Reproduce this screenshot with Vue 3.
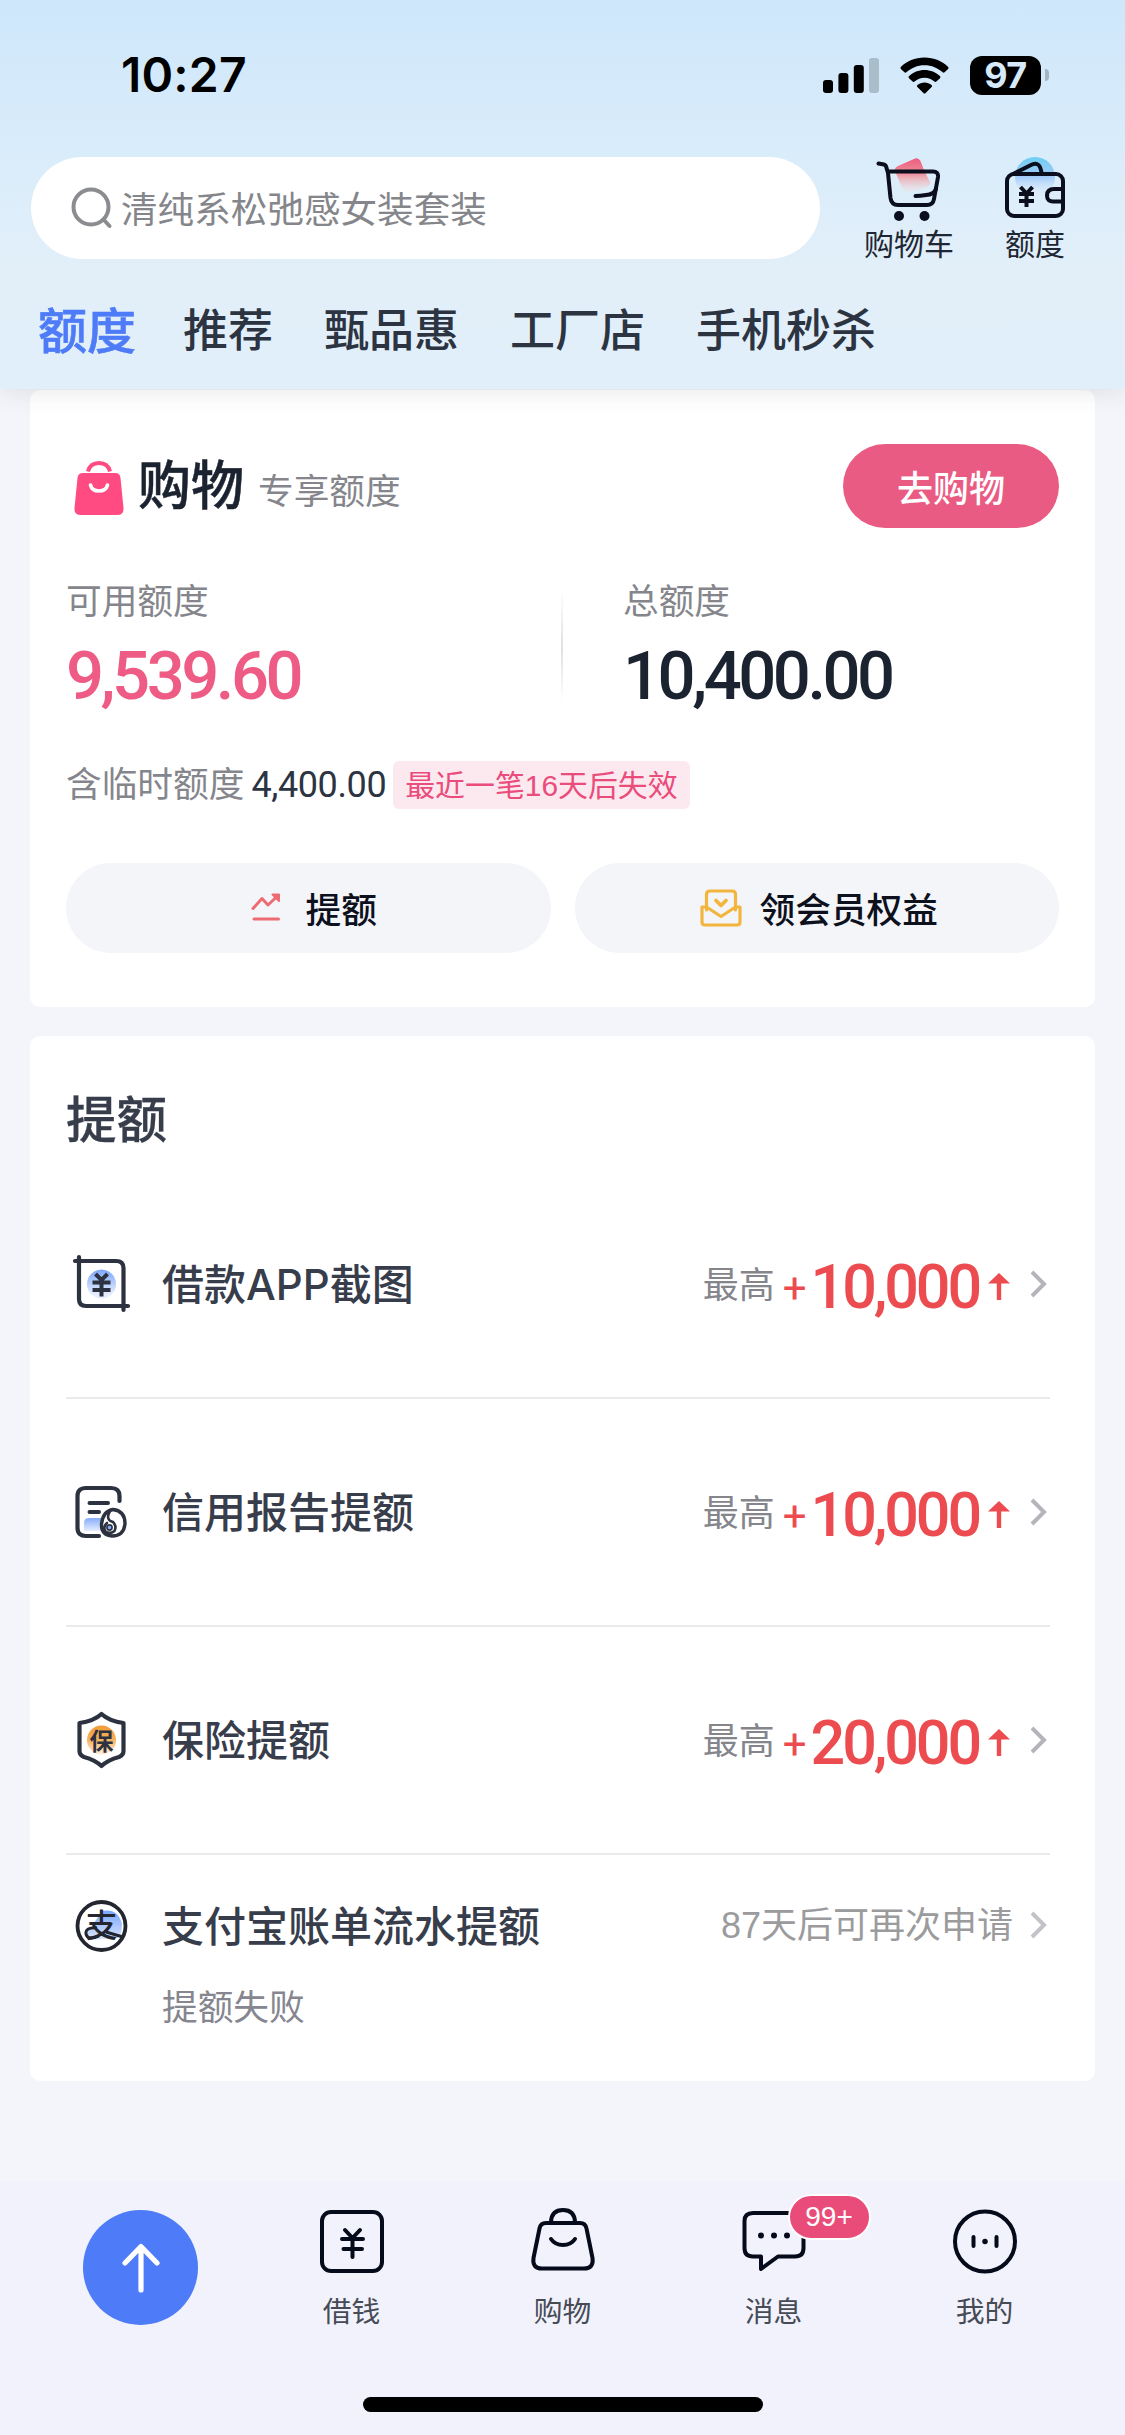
<script setup>
const channels = ['额度', '推荐', '甄品惠', '工厂店', '手机秒杀']

const boosts = [
  { icon: 'crop', title: '借款APP截图', amount: '10,000' },
  { icon: 'report', title: '信用报告提额', amount: '10,000' },
  { icon: 'shield', title: '保险提额', amount: '20,000' },
]

const navItems = [
  { icon: 'loan', label: '借钱' },
  { icon: 'bag', label: '购物' },
  { icon: 'chat', label: '消息', badge: '99+' },
  { icon: 'me', label: '我的' },
]
</script>

<template>
  <div class="screen">
    <header class="header">
      <div class="status">
        <span class="time">10:27</span>
        <div class="status-icons">
          <svg class="signal" width="56" height="36" viewBox="0 0 56 36">
            <rect x="0" y="23" width="10" height="13" rx="3" />
            <rect x="15.4" y="16" width="10" height="20" rx="3" />
            <rect x="30.8" y="8" width="10" height="28" rx="3" />
            <rect x="46" y="1" width="10" height="35" rx="3" fill="#a9bdcb" />
          </svg>
          <svg class="wifi" width="49" height="37" viewBox="0 0 49 37">
            <path d="M24.5 0.5C34 .5 42.500 4.200 48 9.800C48.700 10.500 48.700 11.300 48.100 11.900L44.600 15.300C44 15.900 43.200 15.900 42.600 15.300C37.900 10.900 31.600 8.200 24.500 8.200C17.400 8.200 11.100 10.900 6.400 15.300C5.800 15.900 5 15.900 4.400 15.300L.9 11.900C.3 11.300 .3 10.500 1 9.800C6.500 4.200 15 .5 24.500 .5Z" />
            <path d="M24.500 13C30.500 13 35.900 15.300 39.900 19.100C40.600 19.800 40.600 20.600 40 21.200L36.400 24.600C35.800 25.200 35 25.200 34.400 24.600C31.700 22.200 28.300 20.700 24.500 20.700C20.700 20.700 17.300 22.200 14.600 24.600C14 25.200 13.200 25.200 12.600 24.600L9 21.200C8.400 20.600 8.400 19.800 9.100 19.100C13.100 15.300 18.500 13 24.500 13Z" />
            <path d="M24.500 25.400C27.200 25.400 29.700 26.400 31.500 28C32.200 28.600 32.200 29.400 31.600 30L25.600 36C24.900 36.700 24.100 36.700 23.400 36L17.400 30C16.800 29.400 16.800 28.600 17.500 28C19.300 26.400 21.800 25.400 24.500 25.400Z" />
          </svg>
          <div class="battery">97</div>
          <i class="battery-tip"></i>
        </div>
      </div>

      <div class="search-row">
        <div class="search">
          <svg width="42" height="42" viewBox="0 0 42 42" fill="none" stroke="#8b8c90" stroke-width="4">
            <circle cx="20" cy="20" r="17.500" />
            <path d="M32.500 32.500L38.500 39" stroke-linecap="round" />
          </svg>
          <span>清纯系松弛感女装套装</span>
        </div>
        <div class="shortcut cart">
          <svg width="64" height="66" viewBox="0 0 64 66" fill="none" stroke="#0b0e1c" stroke-width="4" stroke-linecap="round" stroke-linejoin="round">
            <defs>
              <linearGradient id="cartFill" x1="0" y1="0" x2="0" y2="1">
                <stop offset="0" stop-color="#ee5c7f" />
                <stop offset=".45" stop-color="#ec8f9b" />
                <stop offset="1" stop-color="#f4ddda" stop-opacity=".2" />
              </linearGradient>
            </defs>
            <path d="M22 9L38 2Q42 0 44.500 4L48 13L54 25Q55 28 51 30L35 35Q28 36 26 31L19 14Q18 11 22 9Z" fill="url(#cartFill)" stroke="none" />
            <path d="M2.500 6.500L8 7.500Q10 8 10.500 11L12 16L14.500 41Q15.500 48 22 48H51Q57 48 58 42L62 20Q62.500 14.500 57 14.500H12" />
            <path d="M60 32Q58 37.500 50 38Q44 39 39.500 39" />
            <circle cx="23" cy="59" r="5" fill="#0b0e1c" stroke="none" />
            <circle cx="48.500" cy="59" r="5" fill="#0b0e1c" stroke="none" />
          </svg>
          <span>购物车</span>
        </div>
        <div class="shortcut wallet">
          <svg width="62" height="66" viewBox="0 0 62 66" fill="none" stroke="#0b0e1c" stroke-width="4" stroke-linecap="round" stroke-linejoin="round">
            <defs>
              <linearGradient id="walletFill" x1="0" y1="0" x2="0" y2="1">
                <stop offset="0" stop-color="#6fcdf3" />
                <stop offset=".5" stop-color="#a3cbf8" />
                <stop offset=".9" stop-color="#d6e8fb" stop-opacity=".2" />
              </linearGradient>
            </defs>
            <circle cx="31" cy="20" r="20" fill="url(#walletFill)" stroke="none" />
            <rect x="3" y="17" width="56" height="42" rx="7" />
            <path d="M9 17L28 7.500Q36 4 37.500 16" />
            <path d="M59 32H50Q43 32 43 38.500T50 44.500H59" />
            <path d="M16.500 30L22.500 36.500L28.500 30M22.500 36V50M15 37H30M15 44H30" stroke-linecap="butt" />
          </svg>
          <span>额度</span>
        </div>
      </div>

      <nav class="channels">
        <span v-for="(c, i) in channels" :key="c" :class="{ active: i === 0 }">{{ c }}</span>
      </nav>
    </header>

    <main class="content">
      <section class="card quota">
        <div class="quota-head">
          <svg width="50" height="54" viewBox="0 0 50 54">
            <path d="M14 10.500Q16 2 25 2T36 10.500" fill="none" stroke="#ff4b81" stroke-width="4" />
            <path d="M9 12H41Q46 12 46.500 17L49.500 47Q50 54 43 54H7Q0 54 .5 47L3.500 17Q4 12 9 12Z" fill="#ff4b81" />
            <path d="M16.500 24Q18 30 25 30T33.500 24" fill="none" stroke="#fff" stroke-width="3.600" stroke-linecap="round" />
          </svg>
          <h1>购物</h1>
          <span class="sub">专享额度</span>
          <button class="go">去购物</button>
        </div>

        <div class="stats">
          <div class="stat left">
            <span class="label">可用额度</span>
            <strong class="pink">9,539.60</strong>
          </div>
          <i class="split"></i>
          <div class="stat right">
            <span class="label">总额度</span>
            <strong>10,400.00</strong>
          </div>
        </div>

        <div class="temp">
          <span class="temp-label">含临时额度</span>
          <span class="temp-num">4,400.00</span>
          <span class="tag">最近一笔<b>16</b>天后失效</span>
        </div>

        <div class="actions">
          <button class="raise">
            <svg width="30" height="30" viewBox="0 0 30 30" fill="none" stroke="#ee6b74" stroke-width="3" stroke-linecap="round" stroke-linejoin="round">
              <path d="M2 15.500L11 5.500L17 12L27 2.500" />
              <path d="M21.500 1.500H28V8Z" fill="#ee6b74" stroke-width="2" />
              <path d="M3 26H27.500" />
            </svg>
            <span>提额</span>
          </button>
          <button class="perks">
            <svg width="42" height="38" viewBox="0 0 42 38" fill="none" stroke="#f2b63e" stroke-width="3.200" stroke-linecap="round" stroke-linejoin="round">
              <path d="M6.500 21V5.500Q6.500 2 10 2H32Q35.500 2 35.500 5.500V21" />
              <path d="M6.500 18H2V33Q2 36 5 36H37Q40 36 40 33V18H35.500L21 27.500Z" />
              <path d="M16 11.500L21 16.500L26 11.500" stroke-width="3.800" />
            </svg>
            <span>领会员权益</span>
          </button>
        </div>
      </section>

      <section class="card boosts">
        <h2>提额</h2>
        <div v-for="b in boosts" :key="b.title" class="row">
          <div class="row-icon">
            <svg v-if="b.icon === 'crop'" width="60" height="60" viewBox="0 0 60 60" fill="none" stroke="#2d3240" stroke-width="4.200" stroke-linecap="round">
              <defs>
                <linearGradient id="coinFill" x1="0" y1="0" x2="0" y2="1">
                  <stop offset="0" stop-color="#7ba6fa" />
                  <stop offset=".85" stop-color="#e6eeff" />
                </linearGradient>
              </defs>
              <circle cx="29.500" cy="30" r="14.500" fill="url(#coinFill)" stroke="none" />
              <path d="M7 3V45Q7 52 14 52H56M3 7H44Q51.500 7 51.500 14V56" />
              <path d="M23.500 20L29.500 26L35.500 20M29.500 27V42.500M20.500 28.500H38.500M20.500 36H38.500" stroke-width="4" stroke-linecap="butt" />
            </svg>
            <svg v-else-if="b.icon === 'report'" width="60" height="60" viewBox="0 0 60 60" fill="none" stroke="#2d3240" stroke-width="4.200" stroke-linecap="round">
              <defs>
                <linearGradient id="reportFill" x1="0" y1="0" x2="0" y2="1">
                  <stop offset="0" stop-color="#86adfa" />
                  <stop offset="1" stop-color="#e6eeff" />
                </linearGradient>
              </defs>
              <path d="M12 49V41Q12 36 17 36H38V49Z" fill="url(#reportFill)" stroke="none" />
              <path d="M27 54H14Q5.500 54 5.500 46V14Q5.500 6 14 6H39Q47.500 6 47.500 14V19" />
              <path d="M17.500 21H36M17.500 30H27" stroke-width="4" />
              <path d="M41 27.500Q53 29 53 41.500Q52 54 40 54Q29 53 29.500 42Q31 29 41 27.500Z" stroke-width="3.400" fill="#fff" />
              <path d="M38 29Q33 38 41 40Q45 44 42.500 49Q38 52.500 33.500 49.500Q30.500 45 35 41" stroke-width="2.600" />
              <circle cx="37.500" cy="45.500" r="2.600" fill="#86adfa" stroke-width="1.600" />
            </svg>
            <svg v-else width="60" height="60" viewBox="0 0 60 60" fill="none" stroke="#2d3240" stroke-width="4.200" stroke-linejoin="round">
              <defs>
                <linearGradient id="sunFill" x1="0" y1="0" x2="0" y2="1">
                  <stop offset="0" stop-color="#f29a38" />
                  <stop offset=".5" stop-color="#f7b35f" />
                  <stop offset="1" stop-color="#ffeedd" />
                </linearGradient>
              </defs>
              <circle cx="29.500" cy="30" r="14.500" fill="url(#sunFill)" stroke="none" />
              <path d="M29.500 4Q37 11 51.500 13V41Q51.500 45 47 47Q36 50 29.500 56Q23 50 12 47Q7.500 45 7.500 41V13Q22 11 29.500 4Z" />
              <text x="29.500" y="39.500" text-anchor="middle" class="badge-char">保</text>
            </svg>
          </div>
          <span class="row-title">{{ b.title }}</span>
          <span class="most">最高</span>
          <span class="plus">+</span>
          <span class="amount">{{ b.amount }}</span>
          <svg class="up" width="22" height="28" viewBox="0 0 22 28">
            <path d="M11 0L22 10.500H13.200V27H8.800V10.500H0Z" fill="#ec4b50" />
          </svg>
          <svg class="chev" width="17" height="28" viewBox="0 0 17 28" fill="none" stroke="#b3b5ba" stroke-width="4">
            <path d="M2 2L14 14L2 26" />
          </svg>
        </div>
        <div class="row last">
          <div class="row-icon">
            <svg width="60" height="60" viewBox="0 0 60 60" fill="none" stroke="#23262f" stroke-width="3.800">
              <defs>
                <linearGradient id="payFill" x1="0" y1="0" x2="0" y2="1">
                  <stop offset="0" stop-color="#78a4fb" />
                  <stop offset="1" stop-color="#dbe7ff" />
                </linearGradient>
              </defs>
              <path d="M30 15Q46 12 50 28Q50 38 46 42L18 44Q12 38 20 30Z" fill="url(#payFill)" stroke="none" />
              <circle cx="29.500" cy="30" r="24" />
              <text x="29.500" y="41" text-anchor="middle" class="pay-char">支</text>
              <path d="M25 32Q13 31 14 38Q16 45 27 40M34 36L51 41" stroke-width="3" />
            </svg>
          </div>
          <div class="row-text">
            <span class="row-title">支付宝账单流水提额</span>
            <span class="fail">提额失败</span>
          </div>
          <span class="wait"><b>87</b>天后可再次申请</span>
          <svg class="chev" width="17" height="28" viewBox="0 0 17 28" fill="none" stroke="#c2c3c6" stroke-width="4">
            <path d="M2 2L14 14L2 26" />
          </svg>
        </div>
      </section>
    </main>

    <footer class="tabbar">
      <div class="nav">
        <div class="nav-cell">
          <div class="top-btn">
            <svg width="40" height="52" viewBox="0 0 40 52" fill="none" stroke="#fff" stroke-width="5.200" stroke-linecap="round" stroke-linejoin="round">
              <path d="M20 48V5M4 21L20 4.500L36 21" />
            </svg>
          </div>
        </div>
        <div v-for="n in navItems" :key="n.label" class="nav-cell">
          <div class="nav-icon">
            <svg width="66" height="68" viewBox="0 0 66 68" fill="none" stroke="#060b1b" stroke-width="4" stroke-linecap="round" stroke-linejoin="round">
              <g v-if="n.icon === 'loan'">
                <rect x="3" y="5" width="60" height="59" rx="9" />
                <path d="M26 23L33.500 31L41 23M33.500 31V50M23 32H44M24.500 42H43" />
              </g>
              <g v-else-if="n.icon === 'bag'">
                <path d="M16 16H50Q55.500 16 56.500 21.500L62.500 51Q64 61.500 54 61.500H12Q2 61.500 3.500 51L9.500 21.500Q10.500 16 16 16Z" />
                <path d="M21 15Q21.500 3 33 3T45 15M21 32Q25 38 33 38T45 32" />
              </g>
              <g v-else-if="n.icon === 'chat'">
                <path d="M12 6H54Q62.500 6 62.500 14V41Q62.500 49.500 54 49.500H37L20 62V49.500H12Q3.500 49.500 3.500 41V14Q3.500 6 12 6Z" />
                <path d="M20 28.500V28.600M33 28.500V28.600M46 28.500V28.600" stroke-width="6" />
              </g>
              <g v-else>
                <circle cx="33" cy="34.500" r="30" />
                <path d="M21.500 30V39M44.500 30V39" />
                <path d="M33 34.500V34.600" stroke-width="5.500" />
              </g>
            </svg>
            <span v-if="n.badge" class="badge">{{ n.badge }}</span>
          </div>
          <span class="nav-label">{{ n.label }}</span>
        </div>
      </div>
      <i class="home"></i>
    </footer>
  </div>
</template>

<style>
body {
  background: #f4f5fa;
}
</style>

<style scoped>
.screen {
  width: 1125px;
  height: 2435px;
  display: flex;
  flex-direction: column;
  overflow: hidden;
  background: #f4f5fa;
  font-family: "Noto Sans CJK SC", sans-serif;
  white-space: nowrap;
}
.screen * {
  box-sizing: border-box;
}
button {
  border: 0;
  padding: 0;
  font: inherit;
}
b {
  font-weight: 400;
}
h1,
h2 {
  margin: 0;
}
svg {
  display: block;
  flex: none;
}
.header {
  position: relative;
  z-index: 1;
  flex: none;
  height: 389px;
  background: linear-gradient(#cee7fb, #dbedfa 45%, #e2eff9 70%, #e1effa);
  box-shadow: 0 2px 24px rgba(60, 60, 70, 0.12);
}
.status {
  height: 150px;
  display: flex;
  align-items: center;
  padding: 0 76px 0 121px;
}
.time {
  flex: 1;
  font: 600 48px/60px Inter, sans-serif;
  letter-spacing: 0.2px;
  color: #000;
}
.status-icons {
  display: flex;
  align-items: center;
}
.wifi {
  margin: 0 21px;
}
.battery {
  width: 71px;
  height: 39px;
  border-radius: 12px;
  background: #000;
  color: #d6eafb;
  font: 700 36px/39px Inter, sans-serif;
  letter-spacing: -0.5px;
  text-align: center;
}
.battery-tip {
  width: 4px;
  height: 12px;
  margin-left: 4px;
  border-radius: 0 4px 4px 0;
  background: #a3b5c2;
}
.search-row {
  display: flex;
  align-items: flex-start;
  margin-top: 7px;
  height: 102px;
  padding-left: 31px;
}
.search {
  width: 789px;
  height: 102px;
  border-radius: 51px;
  background: #fff;
  display: flex;
  align-items: center;
  padding-left: 40px;
  color: #85868b;
  font-size: 36.600px;
}
.search span {
  margin-left: 8px;
  padding-bottom: 2px;
}
.shortcut {
  display: flex;
  flex-direction: column;
  align-items: center;
  color: #1f2633;
  font-size: 30px;
  line-height: 38px;
}
.cart {
  width: 90px;
  margin-left: 44px;
}
.cart svg {
  margin-left: -3px;
}
.wallet {
  width: 62px;
  margin-left: 50px;
}
.channels {
  display: flex;
  align-items: center;
  height: 130px;
  padding: 6px 0 0 38px;
  gap: 51px;
  font-size: 45px;
  font-weight: 500;
  color: #2c3442;
}
.channels .active {
  margin-right: -4px;
  font-size: 49px;
  color: #4e7bf7;
  -webkit-text-stroke: 0.6px currentColor;
}
.content {
  flex: none;
  height: 1793px;
  padding: 1px 30px 0;
}
.card {
  background: #fff;
  border-radius: 10px;
  padding: 0 36px;
}
.quota {
  height: 617px;
  padding-top: 54px;
}
.quota-head {
  display: flex;
  align-items: center;
  height: 84px;
}
.quota-head svg {
  margin: 3px 14px 0 8px;
}
.quota-head h1 {
  font-size: 53px;
  font-weight: 500;
  line-height: 60px;
  margin-top: -8px;
  color: #1b2330;
  -webkit-text-stroke: 0.5px currentColor;
}
.sub {
  flex: 1;
  margin: 6px 0 0 14px;
  font-size: 35.700px;
  line-height: 44px;
  color: #85868c;
}
.go {
  width: 216px;
  height: 84px;
  border-radius: 42px;
  background: #ea5b83;
  color: #fff;
  font-size: 36px;
  font-weight: 500;
  line-height: 81px;
}
.stats {
  display: flex;
  margin-top: 46px;
  height: 150px;
}
.left {
  width: 495px;
}
.stat {
  display: flex;
  flex-direction: column;
}
.label {
  font-size: 35.700px;
  line-height: 50px;
  color: #85868c;
}
.stat strong {
  font: 500 67px/104px Roboto, sans-serif;
  letter-spacing: -3.5px;
  color: #1b2330;
}
.stat .pink {
  color: #ee5b84;
}
.split {
  width: 2px;
  height: 112px;
  margin-top: 17px;
  background: linear-gradient(#fff, #dfe0e3, #fff);
}
.right {
  margin-left: 60px;
}
.temp {
  display: flex;
  align-items: center;
  height: 48px;
  margin-top: 37px;
  font-size: 36px;
}
.temp-label {
  line-height: 40px;
  margin-top: -7px;
  font-size: 35.700px;
  color: #85868c;
}
.temp-num {
  margin: -1px 7px 0 7px;
  font-family: Roboto, sans-serif;
  letter-spacing: -0.4px;
  color: #2c3442;
}
.tag {
  height: 48px;
  padding: 0 12px;
  border-radius: 6px;
  background: #fce9ef;
  color: #ea4c7c;
  font-size: 29.900px;
  line-height: 45px;
}
.tag b,
.wait b {
  font-family: "Liberation Sans", sans-serif;
}
.actions {
  display: flex;
  gap: 24px;
  margin-top: 54px;
}
.actions button {
  width: 485px;
  height: 90px;
  border-radius: 45px;
  background: #f4f5f9;
  display: flex;
  align-items: center;
  justify-content: center;
  font-size: 35.700px;
  font-weight: 500;
  color: #0c111d;
}
.actions span {
  padding-bottom: 2px;
}
.actions .raise {
  padding-left: 11px;
}
.raise svg {
  margin-right: 25px;
}
.actions .perks {
  padding-left: 4px;
}
.perks svg {
  margin-right: 18px;
}
.boosts {
  height: 1045px;
  margin-top: 29px;
}
.boosts h2 {
  height: 135px;
  padding-top: 50px;
  font-size: 50.500px;
  font-weight: 500;
  line-height: 60px;
  color: #373d4b;
  -webkit-text-stroke: 0.3px currentColor;
}
.row {
  display: flex;
  align-items: center;
  height: 228px;
  margin-right: 9px;
  border-bottom: 2px solid #e9eaec;
}
.row-icon {
  width: 60px;
  margin: 0 30px 0 6px;
}
.row-title {
  flex: 1;
  font-family: Inter, "Noto Sans CJK SC", sans-serif;
  font-size: 42px;
  font-weight: 500;
  line-height: 60px;
  margin-top: 2px;
  color: #373d4b;
}
.most {
  font-size: 36px;
  line-height: 50px;
  margin-top: -4px;
  color: #85868c;
}
.plus {
  margin: 10px 4px 0 8px;
  font: 400 42px/50px Roboto, sans-serif;
  color: #ec4b50;
}
.amount {
  font: 500 61px/70px Roboto, sans-serif;
  letter-spacing: -3.1px;
  margin-top: 5px;
  color: #ec4b50;
}
.up {
  margin: 5px 20px 0 9px;
}
.chev {
  margin-right: 3px;
}
.last {
  height: 226px;
  align-items: flex-start;
  border-bottom: 0;
}
.last .row-icon {
  margin-top: 41px;
}
.row-text {
  flex: 1;
  display: flex;
  flex-direction: column;
  padding-top: 42px;
}
.row-text .row-title {
  flex: none;
  margin: 0;
}
.fail {
  margin-top: 23px;
  font-size: 35.700px;
  line-height: 50px;
  color: #85868f;
}
.wait {
  margin: 42px 17px 0 0;
  font-size: 36px;
  line-height: 50px;
  color: #9b9b9d;
}
.last .chev {
  margin-top: 56px;
}
.badge-char {
  font: 700 24px "Noto Sans CJK SC", sans-serif;
  fill: #2d3240;
  stroke: none;
}
.pay-char {
  font: 500 32px "Noto Sans CJK SC", sans-serif;
  fill: #23262f;
  stroke: none;
}
.tabbar {
  flex: 1;
  display: flex;
  flex-direction: column;
  align-items: center;
  background: #f1f2fb;
}
.nav {
  width: 1055px;
  height: 215px;
  padding-top: 25px;
  display: flex;
}
.nav-cell {
  flex: 1;
  display: flex;
  flex-direction: column;
  align-items: center;
}
.top-btn {
  width: 115px;
  height: 115px;
  margin-top: 3px;
  border-radius: 50%;
  background: #4e7bf7;
  display: flex;
  align-items: center;
  justify-content: center;
}
.nav-icon {
  position: relative;
}
.nav-label {
  margin-top: 15px;
  font-size: 28.800px;
  line-height: 40px;
  color: #474b55;
}
.badge {
  position: absolute;
  left: 47px;
  top: -13px;
  width: 83px;
  height: 46px;
  border: 2px solid #fff;
  border-radius: 23px;
  background: #ea4c79;
  color: #fff;
  font: 400 28px/42px "Liberation Sans", sans-serif;
  text-align: center;
}
.home {
  width: 400px;
  height: 15px;
  border-radius: 8px;
  background: #000;
}
</style>
